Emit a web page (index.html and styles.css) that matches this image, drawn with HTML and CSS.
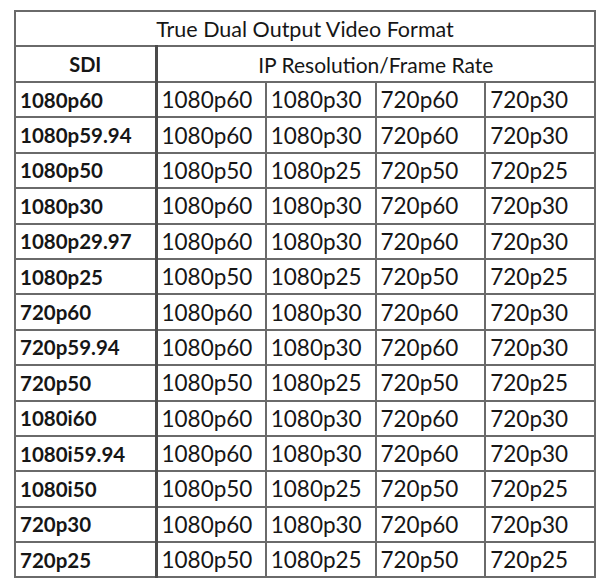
FILE: index.html
```html
<!DOCTYPE html>
<html>
<head>
<meta charset="utf-8">
<link rel="stylesheet" href="styles.css">
</head>
<body>
<table class="fmt">
  <colgroup>
    <col class="c-sdi"><col class="c-ip"><col class="c-ip"><col class="c-ip"><col class="c-ip">
  </colgroup>
  <thead>
    <tr class="r-title"><th colspan="5" class="title">True Dual Output Video Format</th></tr>
    <tr class="r-head"><th class="sdi-h">SDI</th><th colspan="4" class="ip-h">IP Resolution/Frame Rate</th></tr>
  </thead>
  <tbody>
    <tr><th>1080p60</th><td>1080p60</td><td>1080p30</td><td>720p60</td><td>720p30</td></tr>
    <tr><th>1080p59.94</th><td>1080p60</td><td>1080p30</td><td>720p60</td><td>720p30</td></tr>
    <tr><th>1080p50</th><td>1080p50</td><td>1080p25</td><td>720p50</td><td>720p25</td></tr>
    <tr><th>1080p30</th><td>1080p60</td><td>1080p30</td><td>720p60</td><td>720p30</td></tr>
    <tr><th>1080p29.97</th><td>1080p60</td><td>1080p30</td><td>720p60</td><td>720p30</td></tr>
    <tr><th>1080p25</th><td>1080p50</td><td>1080p25</td><td>720p50</td><td>720p25</td></tr>
    <tr><th>720p60</th><td>1080p60</td><td>1080p30</td><td>720p60</td><td>720p30</td></tr>
    <tr><th>720p59.94</th><td>1080p60</td><td>1080p30</td><td>720p60</td><td>720p30</td></tr>
    <tr><th>720p50</th><td>1080p50</td><td>1080p25</td><td>720p50</td><td>720p25</td></tr>
    <tr><th>1080i60</th><td>1080p60</td><td>1080p30</td><td>720p60</td><td>720p30</td></tr>
    <tr><th>1080i59.94</th><td>1080p60</td><td>1080p30</td><td>720p60</td><td>720p30</td></tr>
    <tr><th>1080i50</th><td>1080p50</td><td>1080p25</td><td>720p50</td><td>720p25</td></tr>
    <tr><th>720p30</th><td>1080p60</td><td>1080p30</td><td>720p60</td><td>720p30</td></tr>
    <tr><th>720p25</th><td>1080p50</td><td>1080p25</td><td>720p50</td><td>720p25</td></tr>
  </tbody>
</table>
</body>
</html>
```

FILE: styles.css
```css
html, body {
  margin: 0;
  padding: 0;
  background: #ffffff;
}

.fmt {
  margin: 10px 0 0 14px;
  border-collapse: collapse;
  table-layout: fixed;
  width: 580px;
  font-family: Lato, "Open Sans", sans-serif;
  color: #161616;
  border: 2px solid #666666;
}

.c-sdi { width: 141px; }
.c-ip { width: 109.75px; }

.fmt th,
.fmt td {
  border: 2px solid #6a6a6a;
  padding: 0 0 0 4px;
  height: 35.4px;
  box-sizing: border-box;
  white-space: nowrap;
  overflow: hidden;
}

.fmt td {
  font-size: 22.5px;
  font-weight: 400;
  text-align: left;
}

.fmt tbody th {
  font-size: 20.5px;
  font-weight: 700;
  text-align: left;
  border-right: 3px solid #4a4a4a;
}

.r-title .title {
  font-size: 21.5px;
  font-weight: 400;
  text-align: center;
  height: 35px;
  padding: 0;
}

.r-head th {
  height: 36px;
  font-size: 21px;
  text-align: center;
  padding: 0;
}

.r-head .sdi-h {
  font-size: 20px;
  font-weight: 700;
  border-right: 3px solid #4a4a4a;
}

.r-head .ip-h {
  font-weight: 400;
}
```
